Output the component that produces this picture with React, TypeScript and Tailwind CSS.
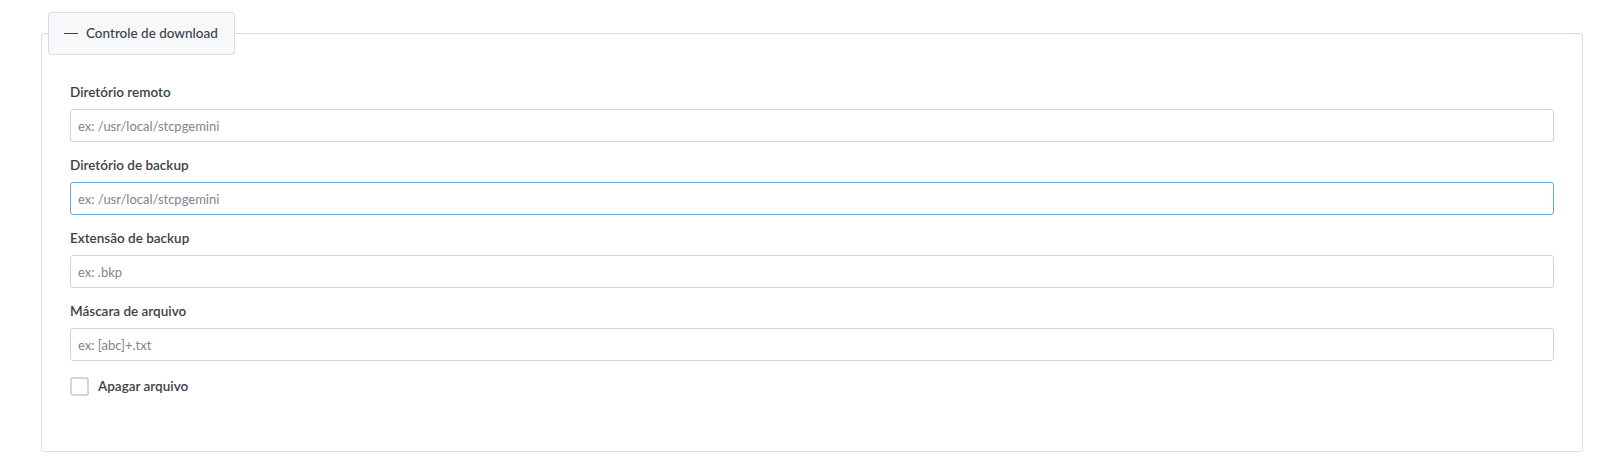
import { useState } from "react";

type Field = {
  id: string;
  label: string;
  placeholder: string;
  focused?: boolean;
};

const fields: Field[] = [
  { id: "remoteDir", label: "Diretório remoto", placeholder: "ex: /usr/local/stcpgemini" },
  { id: "backupDir", label: "Diretório de backup", placeholder: "ex: /usr/local/stcpgemini", focused: true },
  { id: "backupExt", label: "Extensão de backup", placeholder: "ex: .bkp" },
  { id: "fileMask", label: "Máscara de arquivo", placeholder: "ex: [abc]+.txt" },
];

export default function App() {
  const [deleteFile, setDeleteFile] = useState(false);

  return (
    <div className="min-h-screen bg-white pl-[41px] pr-[32px] pt-[12px] font-['Lato',sans-serif] text-[#3b3f48]">
      <fieldset className="rounded-[3px] border border-[#dcdde2] p-0">
        {/* Collapsible legend */}
        <legend className="ml-[6px] flex h-[43px] items-center gap-[8px] whitespace-nowrap rounded-[3px] border border-[#dcdde2] bg-[#f7f8fa] pl-[15px] pr-[16px] text-[13.5px] font-medium">
          <span className="block h-[1.5px] w-[14px] bg-[#3b3f48]" />
          Controle de download
        </legend>

        <div className="px-[28px] pb-[55px] pt-[27px]">
          {fields.map((f) => (
            <div key={f.id} className="mb-[13px]">
              <label htmlFor={f.id} className="mb-[7px] block text-[13.5px] font-semibold leading-[20px]">
                {f.label}
              </label>
              <input
                id={f.id}
                type="text"
                placeholder={f.placeholder}
                className={`block h-[33px] w-full rounded-[3px] border bg-white px-[7px] text-[13px] outline-none placeholder:text-[#80858e] ${
                  f.focused ? "border-[#67a9e3]" : "border-[#d3d4da]"
                }`}
              />
            </div>
          ))}

          <label className="mt-[15px] flex items-center gap-[9px] text-[13.5px] font-semibold">
            <input
              type="checkbox"
              checked={deleteFile}
              onChange={(e) => setDeleteFile(e.target.checked)}
              className="h-[19px] w-[19px] appearance-none rounded-[3px] border-2 border-[#d3d5da] bg-white"
            />
            Apagar arquivo
          </label>
        </div>
      </fieldset>
    </div>
  );
}
